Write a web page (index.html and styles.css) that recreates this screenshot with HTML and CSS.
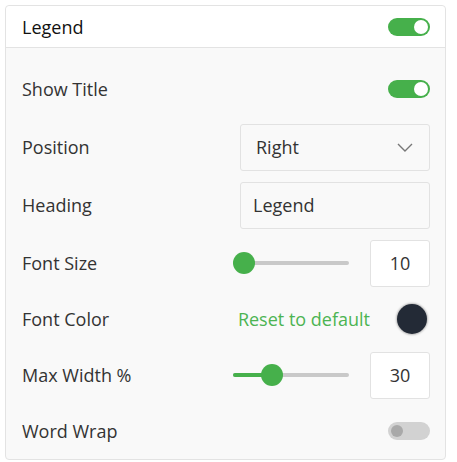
FILE: index.html
```html
<!DOCTYPE html>
<html lang="en">
<head>
    <meta charset="UTF-8">
    <title>Legend settings</title>
    <link rel="stylesheet" href="styles.css">
</head>
<body>
    <div class="panel">
        <div class="panel-header">
            <span class="panel-title">Legend</span>
            <span class="toggle on"><span class="knob"></span></span>
        </div>

        <div class="panel-body">
            <div class="row">
                <span class="label">Show Title</span>
                <span class="toggle on"><span class="knob"></span></span>
            </div>

            <div class="row">
                <span class="label">Position</span>
                <div class="select">
                    <span>Right</span>
                    <svg class="chevron" width="16" height="9" viewBox="0 0 16 9">
                        <path d="M1 1 L8 8 L15 1" fill="none" stroke="#777" stroke-width="1.4"/>
                    </svg>
                </div>
            </div>

            <div class="row">
                <span class="label">Heading</span>
                <div class="text-input">Legend</div>
            </div>

            <div class="row">
                <span class="label">Font Size</span>
                <div class="slider-group">
                    <div class="slider">
                        <div class="track"><div class="fill" style="width: 0px"></div></div>
                        <div class="thumb" style="left: 0px"></div>
                    </div>
                    <div class="number-input">10</div>
                </div>
            </div>

            <div class="row short">
                <span class="label">Font Color</span>
                <div class="color-group">
                    <span class="reset-link">Reset to default</span>
                    <span class="swatch"></span>
                </div>
            </div>

            <div class="row">
                <span class="label">Max Width %</span>
                <div class="slider-group">
                    <div class="slider">
                        <div class="track"><div class="fill" style="width: 39px"></div></div>
                        <div class="thumb" style="left: 28px"></div>
                    </div>
                    <div class="number-input">30</div>
                </div>
            </div>

            <div class="row short">
                <span class="label">Word Wrap</span>
                <span class="toggle"><span class="knob"></span></span>
            </div>
        </div>
    </div>
</body>
</html>
```

FILE: styles.css
```css
* {
    margin: 0;
    padding: 0;
    box-sizing: border-box;
}

body {
    font-family: "Open Sans", "Noto Sans", sans-serif;
    background: #fff;
    padding: 5px;
}

.panel {
    width: 441px;
    border: 1px solid #e3e3e3;
    border-radius: 4px;
    background: #f9f9f9;
}

.panel-header {
    height: 42px;
    display: flex;
    align-items: center;
    justify-content: space-between;
    padding: 0 15px 0 16px;
    background: #fff;
    border-bottom: 1px solid #e3e3e3;
    border-radius: 4px 4px 0 0;
}

.panel-title {
    font-size: 18px;
    color: #111;
}

.panel-body {
    padding: 12px 15px 1px 16px;
}

.row {
    height: 58px;
    display: flex;
    align-items: center;
    justify-content: space-between;
}

.row.short {
    height: 54px;
}

.label {
    font-size: 18px;
    color: #333;
}

/* toggles */
.toggle {
    position: relative;
    width: 42px;
    height: 18px;
    border-radius: 9px;
    background: #d2d2d2;
}

.toggle .knob {
    position: absolute;
    top: 3px;
    left: 3px;
    width: 12px;
    height: 12px;
    border-radius: 50%;
    background: #a9a9a9;
}

.toggle.on {
    background: #46b04b;
}

.toggle.on .knob {
    top: 2px;
    left: auto;
    right: 2px;
    width: 14px;
    height: 14px;
    background: #fff;
}

/* inputs */
.select,
.text-input {
    width: 190px;
    height: 47px;
    display: flex;
    align-items: center;
    border: 1px solid #e2e2e2;
    border-radius: 3px;
    background: #f9f9f9;
    font-size: 18px;
    color: #333;
}

.select {
    justify-content: space-between;
    padding: 0 16px 0 15px;
}

.text-input {
    padding: 0 12px;
}

.number-input {
    width: 60px;
    height: 47px;
    display: flex;
    align-items: center;
    justify-content: center;
    border: 1px solid #e2e2e2;
    border-radius: 3px;
    background: #fff;
    font-size: 18px;
    color: #333;
}

/* sliders */
.slider-group {
    display: flex;
    align-items: center;
    gap: 21px;
}

.slider {
    position: relative;
    width: 116px;
    height: 22px;
    display: flex;
    align-items: center;
}

.track {
    width: 100%;
    height: 4px;
    background: #c9c9c9;
    border-radius: 2px;
}

.fill {
    height: 100%;
    background: #46b04b;
    border-radius: 2px;
}

.thumb {
    position: absolute;
    top: 0;
    width: 22px;
    height: 22px;
    border-radius: 50%;
    background: #46b04b;
}

/* font colour */
.color-group {
    display: flex;
    align-items: center;
    gap: 27px;
    padding-right: 3px;
}

.reset-link {
    font-size: 18px;
    color: #4cb452;
}

.swatch {
    width: 30px;
    height: 30px;
    border-radius: 50%;
    background: #232a36;
    box-shadow: 0 0 2px 1px rgba(0, 0, 0, 0.25);
}
```
